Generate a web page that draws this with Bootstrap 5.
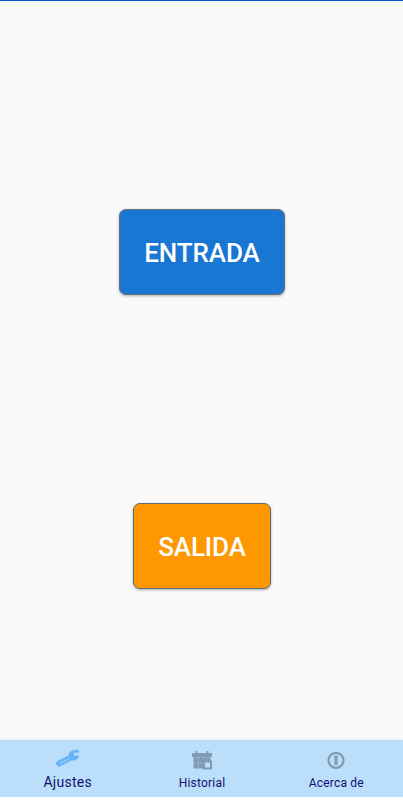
<!DOCTYPE html>
<html lang="es">
<head>
<meta charset="utf-8">
<meta name="viewport" content="width=device-width, initial-scale=1">
<title>Fichaje</title>
<link rel="stylesheet" href="https://cdn.jsdelivr.net/npm/bootstrap@5.3.0/dist/css/bootstrap.min.css">
<style>
body{font-family:Roboto,"Liberation Sans",sans-serif;background:#fff;overflow:hidden}
.app{height:797px;background:#fafafa;border-top:1px solid #0058cb}
.stage{padding-top:56px}
.half{height:294px;padding-left:1px}
.punch{height:86px;font-size:26px;font-weight:500;line-height:1;color:#fff;border:1px solid #6b7075;border-radius:7px;padding:3px 0 0;box-shadow:0 1px 3px rgba(0,0,0,.32)}
.punch-in{width:166px;background:#1976d2;letter-spacing:-.1px}
.punch-out{width:138px;background:#ff9800;border-color:#5d6c78;letter-spacing:-.1px}
.punch-in:hover{background:#1565c0;color:#fff}
.punch-out:hover{background:#fb8c00;color:#fff}
.tabs{height:57px;background:#bbdefb;box-shadow:0 -1px 2px rgba(0,0,0,.06)}
.tab{color:#101070;font-size:12px;line-height:16px;padding:9px 0 0 1px}
.tab svg{display:block;height:22px;width:26px}
.tab span{margin-top:4px;letter-spacing:.2px}
.tab.current span{font-size:14px;margin-top:3px;letter-spacing:.25px}
</style>
<script src="https://cdn.jsdelivr.net/npm/bootstrap@5.3.0/dist/js/bootstrap.bundle.min.js"></script>
</head>
<body>
<div class="app d-flex flex-column">
  <main class="stage flex-grow-1 d-flex flex-column justify-content-center">
    <div class="half d-flex justify-content-center align-items-center"><button class="btn punch punch-in">ENTRADA</button></div>
    <div class="half d-flex justify-content-center align-items-center"><button class="btn punch punch-out">SALIDA</button></div>
  </main>
  <nav class="tabs row g-0 flex-shrink-0">
    <a class="tab current col d-flex flex-column align-items-center text-decoration-none" href="#">
      <svg viewBox="0 0 26 22"><path fill-rule="evenodd" fill="#64b5f6" stroke="#64b5f6" stroke-width=".7" stroke-linejoin="round" d="M23.500 1.600C20 .6 16 1.400 14.300 4.200Q13.700 5.400 13.700 6.700L2.700 12.100Q1 13.300 1.700 15.500Q2.700 17.600 5 17.100L16.800 11.100C20.300 11.500 23.300 9.700 23.800 6.700L19.500 7.200L18.200 5L20 3.200L23.700 3.200ZM4.800 13.700L14.300 9.100L15.300 10L5.700 14.900L4.500 15Z"/></svg>
      <span>Ajustes</span>
    </a>
    <a class="tab col d-flex flex-column align-items-center text-decoration-none" href="#">
      <svg viewBox="0 0 26 22"><path fill="#7f9bb3" d="M6.500 2h2v3h-2zM17.500 2h2v3h-2zM3 4h20v4H3zM4.500 8h17v11.500H4.500z"/><path stroke="#a0bdd6" stroke-width=".6" d="M4.500 8.500h17M4.500 14h10M9.500 8.500v11M15 8.500v3"/><path fill="#bbdefb" stroke="#7f9bb3" stroke-width="2" d="M15 12.500h7v7h-7z"/></svg>
      <span>Historial</span>
    </a>
    <a class="tab col d-flex flex-column align-items-center text-decoration-none" href="#">
      <svg viewBox="0 0 26 22"><circle cx="13" cy="11.300" r="7.500" fill="none" stroke="#7f9bb3" stroke-width="2.300"/><path fill="#7f9bb3" d="M11.500 6.500h3v9.600h-3z"/></svg>
      <span>Acerca de</span>
    </a>
  </nav>
</div>
</body>
</html>
